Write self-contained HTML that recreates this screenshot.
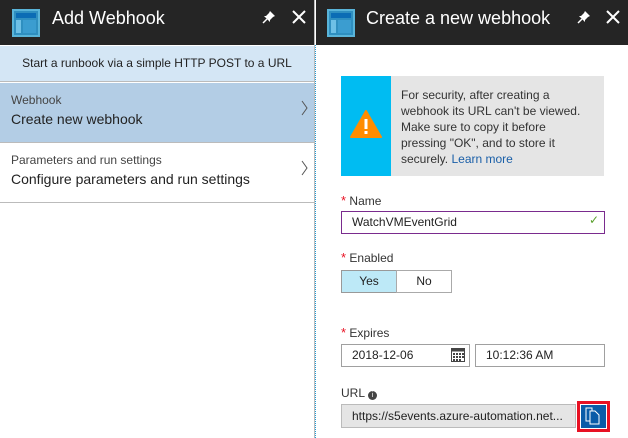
<!DOCTYPE html><html><head><style>
*{margin:0;padding:0;box-sizing:border-box}
body{width:628px;height:438px;background:#fff;font-family:"Segoe UI","Liberation Sans",sans-serif;position:relative;overflow:hidden;color:#222}
.abs{position:absolute}
.hdr{background:#252525;height:45px;top:0}
.ttl{color:#fff;font-size:18px;top:8px}
.lbl{font-size:12px;color:#333}
.star{color:#e81123;font-size:13px}
.inp{border:1px solid #a0a0a0;background:#fff;font-size:12px;padding-left:10px;line-height:21px}
</style></head><body>
<!-- left -->
<div class="abs hdr" style="left:0;width:315px"></div>
<svg class="abs" style="left:12px;top:9px" width="28" height="28"><rect x="1" y="1" width="26" height="26" fill="#2f8fc0" stroke="#59b4d9" stroke-width="2"/><rect x="4" y="4" width="20" height="5" fill="#0b6cb5"/><rect x="4" y="11" width="5" height="13" fill="#6ec0e6"/><rect x="11" y="11" width="13" height="13" fill="#3b9dd0"/></svg>
<div class="abs ttl" style="left:52px">Add Webhook</div>
<svg class="abs" style="left:262px;top:10px" width="14" height="14"><path d="M8 1 L13 6 L11 7 L8 10 L8 12 L2 6 L4 6 L7 3 Z" fill="#fff"/><path d="M5 9 L1 13" stroke="#fff" stroke-width="1.5"/></svg>
<svg class="abs" style="left:292px;top:10px" width="14" height="14"><path d="M1 1 L13 13 M13 1 L1 13" stroke="#fff" stroke-width="2"/></svg>
<div class="abs" style="left:0;top:46px;width:314px;height:36px;background:#d4e6f5;border-bottom:1px solid #bbb;font-size:12px;text-align:center;line-height:35px">Start a runbook via a simple HTTP POST to a URL</div>
<div class="abs" style="left:0;top:83px;width:314px;height:60px;background:#b3cde5;border-bottom:1px solid #bbb"></div>
<div class="abs" style="left:11px;top:93px;font-size:12px;color:#444">Webhook</div>
<div class="abs" style="left:11px;top:111px;font-size:14px;color:#222">Create new webhook</div>
<div class="abs" style="left:0;top:143px;width:314px;height:60px;border-bottom:1px solid #bbb"></div>
<div class="abs" style="left:11px;top:153px;font-size:12px;color:#444">Parameters and run settings</div>
<div class="abs" style="left:11px;top:171px;font-size:14px;color:#222">Configure parameters and run settings</div>
<svg class="abs" style="left:300px;top:100px" width="10" height="80"><path d="M2 1 L7 8 L2 15" stroke="#555" fill="none"/><path d="M2 61 L7 68 L2 75" stroke="#555" fill="none"/></svg>
<div class="abs" style="left:314px;top:0;width:1px;height:438px;background:#bbb"></div>
<div class="abs" style="left:315px;top:45px;width:0;height:393px;border-left:1px dotted #1e9ad6"></div>
<!-- right -->
<div class="abs hdr" style="left:316px;width:312px"></div>
<svg class="abs" style="left:327px;top:9px" width="28" height="28"><rect x="1" y="1" width="26" height="26" fill="#2f8fc0" stroke="#59b4d9" stroke-width="2"/><rect x="4" y="4" width="20" height="5" fill="#0b6cb5"/><rect x="4" y="11" width="5" height="13" fill="#6ec0e6"/><rect x="11" y="11" width="13" height="13" fill="#3b9dd0"/></svg>
<div class="abs ttl" style="left:366px">Create a new webhook</div>
<svg class="abs" style="left:577px;top:10px" width="14" height="14"><path d="M8 1 L13 6 L11 7 L8 10 L8 12 L2 6 L4 6 L7 3 Z" fill="#fff"/><path d="M5 9 L1 13" stroke="#fff" stroke-width="1.5"/></svg>
<svg class="abs" style="left:606px;top:10px" width="14" height="14"><path d="M1 1 L13 13 M13 1 L1 13" stroke="#fff" stroke-width="2"/></svg>
<div class="abs" style="left:341px;top:76px;width:263px;height:100px;background:#e5e5e5"></div>
<div class="abs" style="left:341px;top:76px;width:50px;height:100px;background:#00bcf2"></div>
<svg class="abs" style="left:350px;top:110px" width="32" height="28"><path d="M16 1 L31 27 L1 27 Z" fill="#ff8c00" stroke="#ff8c00" stroke-linejoin="round" stroke-width="2"/><rect x="14.5" y="9" width="3" height="10" fill="#fff"/><rect x="14.5" y="21" width="3" height="3" fill="#fff"/></svg>
<div class="abs" style="left:401px;top:87px;width:180px;font-size:12px;line-height:16px;color:#333">For security, after creating a webhook its URL can't be viewed. Make sure to copy it before pressing "OK", and to store it securely. <span style="color:#1a5fa8">Learn more</span></div>
<div class="abs lbl" style="left:341px;top:193px"><span class="star">*</span> Name</div>
<div class="abs inp" style="left:341px;top:211px;width:264px;height:23px;border-color:#7a2b8e">WatchVMEventGrid</div>
<div class="abs" style="left:589px;top:213px;color:#5aa02c;font-size:12px">✓</div>
<div class="abs lbl" style="left:341px;top:250px"><span class="star">*</span> Enabled</div>
<div class="abs" style="left:341px;top:270px;width:56px;height:23px;background:#bde9f7;border:1px solid #999;font-size:12px;text-align:center;line-height:21px">Yes</div>
<div class="abs" style="left:396px;top:270px;width:56px;height:23px;border:1px solid #aaa;font-size:12px;text-align:center;line-height:21px">No</div>
<div class="abs lbl" style="left:341px;top:325px"><span class="star">*</span> Expires</div>
<div class="abs inp" style="left:341px;top:344px;width:129px;height:23px">2018-12-06</div>
<svg class="abs" style="left:451px;top:348px" width="14" height="14"><rect x="0.5" y="0.5" width="13" height="13" fill="#fff" stroke="#444"/><rect x="0.5" y="0.5" width="13" height="3" fill="#444"/><g fill="#444"><rect x="2" y="5" width="2" height="2"/><rect x="5" y="5" width="2" height="2"/><rect x="8" y="5" width="2" height="2"/><rect x="11" y="5" width="2" height="2"/><rect x="2" y="8" width="2" height="2"/><rect x="5" y="8" width="2" height="2"/><rect x="8" y="8" width="2" height="2"/><rect x="11" y="8" width="2" height="2"/><rect x="2" y="11" width="2" height="2"/><rect x="5" y="11" width="2" height="2"/><rect x="8" y="11" width="2" height="2"/></g></svg>
<div class="abs inp" style="left:475px;top:344px;width:130px;height:23px">10:12:36 AM</div>
<div class="abs lbl" style="left:341px;top:386px">URL <span style="display:inline-block;width:9px;height:9px;border-radius:50%;background:#444;color:#fff;font-size:7px;text-align:center;line-height:9px;vertical-align:0">i</span></div>
<div class="abs inp" style="left:341px;top:404px;width:235px;height:24px;background:#e5e5e5;border-color:#bbb;line-height:22px">https://s5events.azure-automation.net...</div>
<div class="abs" style="left:577px;top:401px;width:33px;height:31px;border:3px solid #e81123;background:#fff"></div>
<div class="abs" style="left:581px;top:405px;width:25px;height:23px;background:#0a5ca8"></div>
<svg class="abs" style="left:585px;top:407px" width="16" height="18"><path d="M1 1 H7 V14 H1 Z" fill="#0a5ca8" stroke="#fff"/><path d="M5 4 H10 L14 8 V17 H5 Z" fill="#0a5ca8" stroke="#fff"/></svg>
</body></html>
